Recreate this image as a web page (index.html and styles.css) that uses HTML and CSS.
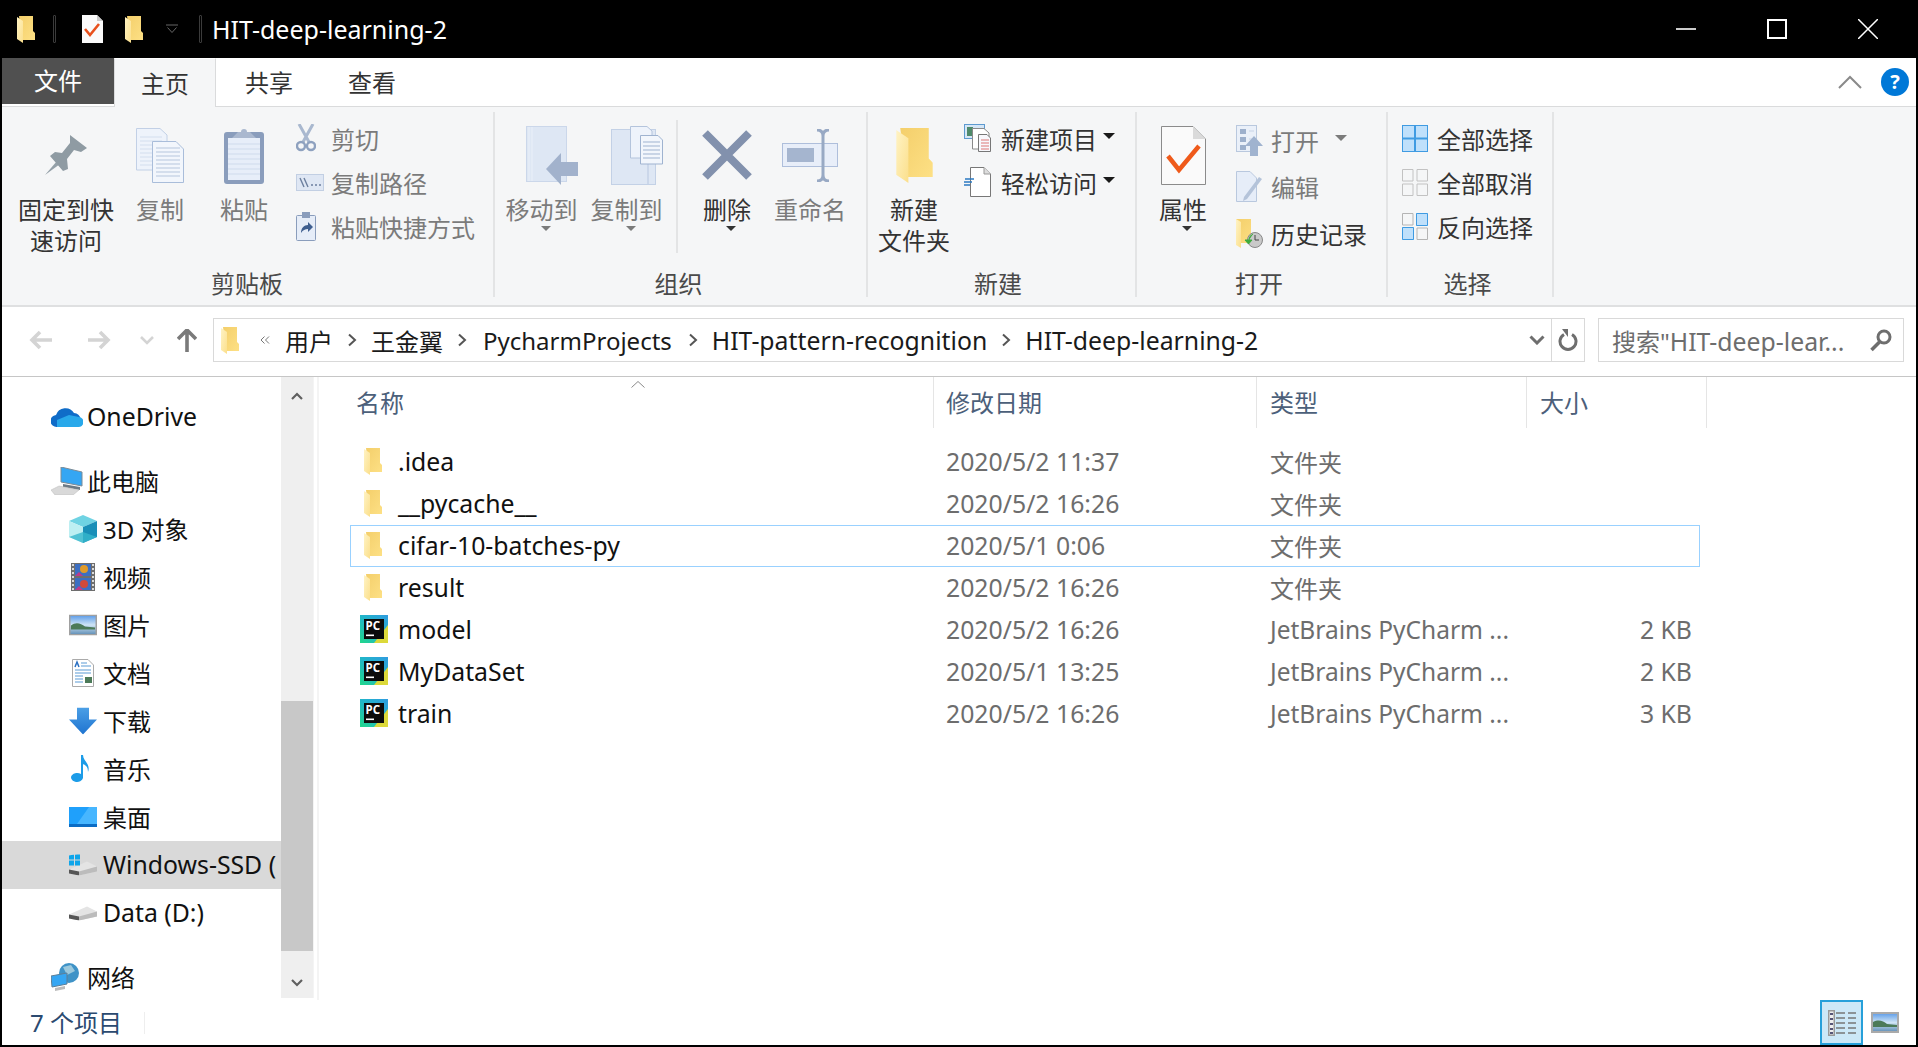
FILE: index.html
```html
<!DOCTYPE html>
<html lang="zh">
<head>
<meta charset="utf-8">
<title>HIT-deep-learning-2</title>
<link rel="stylesheet" href="styles.css">
</head>
<body>
<svg class="defs" width="0" height="0" aria-hidden="true">
  <defs>
    <linearGradient id="gFlap" x1="0" y1="0" x2="1" y2="1"><stop offset="0" stop-color="#fff3c4"/><stop offset="1" stop-color="#fbdf8c"/></linearGradient>
    <linearGradient id="gBack" x1="0" y1="0" x2="1" y2="1"><stop offset="0" stop-color="#f4cf6b"/><stop offset="1" stop-color="#fde085"/></linearGradient>
    <linearGradient id="gPc" x1="0" y1="1" x2="1" y2="0"><stop offset="0" stop-color="#21d789"/><stop offset=".5" stop-color="#21b6c9"/><stop offset="1" stop-color="#2f9be0"/></linearGradient>
    <linearGradient id="gSky" x1="0" y1="0" x2="0" y2="1"><stop offset="0" stop-color="#5b9be8"/><stop offset=".5" stop-color="#cfe4f5"/><stop offset="1" stop-color="#5e8db5"/></linearGradient>
    <linearGradient id="gBlue" x1="0" y1="0" x2="0" y2="1"><stop offset="0" stop-color="#4b9fe6"/><stop offset="1" stop-color="#1f74d0"/></linearGradient>
    <symbol id="folder" viewBox="0 0 18 27">
      <path d="M2 0H16V15L18 17V24H5Z" fill="url(#gBack)"/>
      <path d="M0 1L6 5V27L0 23Z" fill="url(#gFlap)"/>
    </symbol>
    <symbol id="pc" viewBox="0 0 28 28">
      <rect width="28" height="28" fill="url(#gPc)"/>
      <path d="M14 28L28 10V28Z" fill="#dcd93a"/>
      <rect x="4" y="4" width="20" height="20" fill="#0b0b0b"/>
      <text x="5.5" y="14.500" class="pc-text">PC</text>
      <rect x="6" y="19.5" width="8" height="1.6" fill="#fff"/>
    </symbol>
    <symbol id="crumb" viewBox="0 0 10 14"><path d="M2 1.5L8 7L2 12.5" fill="none" stroke="#555" stroke-width="2"/></symbol>
  </defs>
</svg>

<div class="window">
  <header class="titlebar">
    <svg class="tb-folder-a" width="18" height="27"><use href="#folder"/></svg>
    <span class="tb-sep tb-sep-a"></span>
    <svg class="tb-check" width="21" height="28" viewBox="0 0 21 28"><path d="M0 0H15L21 6V28H0Z" fill="#fafafa"/><path d="M15 0V6H21Z" fill="#c9c9c9"/><path d="M3 14L8 20L17 9" fill="none" stroke="#e8501c" stroke-width="2.6"/></svg>
    <svg class="tb-folder-b" width="18" height="27"><use href="#folder"/></svg>
    <svg class="tb-down" width="12" height="10" viewBox="0 0 12 10"><path d="M0 1H12M1.5 3.5L6 8.5L10.500 3.500" fill="none" stroke="#666" stroke-width="1"/></svg>
    <span class="tb-sep tb-sep-b"></span>
    <span class="tb-title">HIT-deep-learning-2</span>
    <div class="win-btns">
      <svg width="20" height="20" viewBox="0 0 20 20"><path d="M0 10H20" stroke="#fff" stroke-width="1.6"/></svg>
      <svg width="20" height="20" viewBox="0 0 20 20"><rect x="1" y="1" width="18" height="18" fill="none" stroke="#fff" stroke-width="2"/></svg>
      <svg width="20" height="20" viewBox="0 0 20 20"><path d="M0 0L20 20M20 0L0 20" stroke="#fff" stroke-width="1.5"/></svg>
    </div>
  </header>

  <nav class="tabs">
    <div class="tab-file">文件</div>
    <div class="tab tab-home">主页</div>
    <div class="tab tab-share">共享</div>
    <div class="tab tab-view">查看</div>
    <div class="tabs-right">
      <svg width="24" height="14" viewBox="0 0 24 14"><path d="M1 13L12 2L23 13" fill="none" stroke="#8a8a8a" stroke-width="2"/></svg>
      <span class="help">?</span>
    </div>
  </nav>

  <section class="ribbon">
    <div class="group g-clip">
      <div class="g-body">
        <div class="big w-pin">
          <div class="big-ico"><svg width="42" height="40" viewBox="0 0 42 40"><path d="M0 40L12 26L15 29Z" fill="#94a0a8"/><path d="M25 0L42 13L36 17L29 15L22 24L23 34L18 36L5 21L10 17L17 18L25 8Z" fill="#8f9ba3"/></svg></div>
          <div class="big-txt">固定到快<br>速访问</div>
        </div>
        <div class="big w-copy dis">
          <div class="big-ico"><svg width="48" height="55" viewBox="0 0 48 55"><path d="M.5.5H24L31 7V42H.5Z" fill="#eef3fb" stroke="#c2d0e6"/><path d="M4 9H26M4 13H26M4 17H26M4 21H26M4 25H26M4 29H26M4 33H26M4 37H26" stroke="#d3deee"/><path d="M16.500 13.500H40L47.500 21V54.500H16.500Z" fill="#f2f6fc" stroke="#a9bdda"/><path d="M20 20H44M20 24H44M20 28H44M20 32H44M20 36H44M20 40H44M20 44H44M20 48H44" stroke="#b6c6dd"/></svg></div>
          <div class="big-txt">复制</div>
        </div>
        <div class="big w-paste dis">
          <div class="big-ico"><svg width="40" height="57" viewBox="0 0 40 57"><rect y="5" width="40" height="52" rx="3" fill="#8a9dbc"/><rect x="4" y="11" width="32" height="42" fill="#e7eef9"/><path d="M4 17H36M4 22H36M4 27H36M4 32H36M4 37H36M4 42H36M4 47H36" stroke="#cfdbec"/><path d="M8 11L14 5H17A3 3 0 0 1 23 5H26L32 11Z" fill="#aab8cf"/></svg></div>
          <div class="big-txt">粘贴</div>
        </div>
        <div class="small-col col-clip">
          <div class="small dis"><span class="s-ico"><svg width="20" height="28" viewBox="0 0 20 28"><path d="M3 0L13 18M17 0L7 18" stroke="#a9b8cf" stroke-width="3"/><circle cx="5" cy="22" r="4" fill="none" stroke="#8ea1bf" stroke-width="2.400"/><circle cx="15" cy="22" r="4" fill="none" stroke="#8ea1bf" stroke-width="2.400"/></svg></span>剪切</div>
          <div class="small dis"><span class="s-ico"><svg width="28" height="17" viewBox="0 0 28 17"><rect x=".5" y=".5" width="27" height="16" fill="#dfe7f4" stroke="#c2cfe3"/><path d="M4 4L8 13M8 4L12 13" stroke="#6c7f9e" stroke-width="1.400"/><path d="M15 11H17M19 11H21M23 11H25" stroke="#6c7f9e" stroke-width="1.600"/></svg></span>复制路径</div>
          <div class="small dis"><span class="s-ico"><svg width="20" height="29" viewBox="0 0 20 29"><rect x=".5" y="3.500" width="19" height="25" rx="1" fill="#e6edf8" stroke="#8a9dbc"/><rect x="6" y="0" width="8" height="6" fill="#8a9dbc"/><path d="M5 21C5 16 8 13 12 13V10L17 15L12 20V17C9 17 7 18 5 21Z" fill="#3f5f8f"/></svg></span>粘贴快捷方式</div>
        </div>
      </div>
      <div class="g-label">剪贴板</div>
    </div>

    <div class="group g-org">
      <div class="g-body">
        <div class="big w-85 dis">
          <div class="big-ico ico-end"><svg width="52" height="59" viewBox="0 0 52 59"><rect x=".5" y=".5" width="40" height="55" fill="#dee7f4" stroke="#cbd7ea"/><path d="M3 1V55M6 1V55" stroke="#eaf0f9"/><path d="M20 43L35 27V36H52V50H35V59Z" fill="#a2b2cc"/></svg></div>
          <div class="big-txt drop">移动到</div>
        </div>
        <div class="big w-85 dis">
          <div class="big-ico ico-end"><svg width="52" height="59" viewBox="0 0 52 59"><rect x=".5" y="3.500" width="44" height="55" fill="#dee7f4" stroke="#c3d1e6"/><path d="M37 4V58" stroke="#cbd7ea" stroke-width="2"/><path d="M19.500 .5H36L41 5V32H19.500Z" fill="#eef3fb" stroke="#b4c4dc"/><path d="M29.500 9.500H47L51.500 14V38H29.500Z" fill="#f2f6fc" stroke="#9fb3d0"/><path d="M32 16H49M32 20H49M32 24H49M32 28H49M32 32H49" stroke="#9fb3d0"/></svg></div>
          <div class="big-txt drop">复制到</div>
        </div>
        <div class="inner-sep"></div>
        <div class="big w-del">
          <div class="big-ico"><svg width="50" height="50" viewBox="0 0 50 50"><path d="M3 3L47 47M47 3L3 47" stroke="#8291ad" stroke-width="8"/></svg></div>
          <div class="big-txt drop">删除</div>
        </div>
        <div class="big w-ren dis">
          <div class="big-ico"><svg width="56" height="53" viewBox="0 0 56 53"><rect x=".5" y="14.500" width="55" height="23" fill="#e8eef9" stroke="#aebedb"/><rect x="5" y="19" width="27" height="14" fill="#a5b5cf"/><path d="M35 1C39 1 41 3 41 7V46C41 50 39 52 35 52M47 1C43 1 41 3 41 7M47 52C43 52 41 50 41 46" fill="none" stroke="#98a9c4" stroke-width="3"/></svg></div>
          <div class="big-txt">重命名</div>
        </div>
      </div>
      <div class="g-label">组织</div>
    </div>

    <div class="group g-new">
      <div class="g-body">
        <div class="big w-92">
          <div class="big-ico"><svg width="37" height="55" viewBox="0 0 18 27"><use href="#folder"/></svg></div>
          <div class="big-txt">新建<br>文件夹</div>
        </div>
        <div class="small-col col-new">
          <div class="small"><span class="s-ico s-ico-new"><svg width="27" height="28" viewBox="0 0 27 28"><rect x=".5" y=".5" width="20" height="14" fill="#d5e6f6" stroke="#5d9ad0"/><rect x="3" y="3" width="6" height="9" fill="#4f8a6b"/><path d="M8.500 4.500H20L25 9V25H8.500Z" fill="#fff" stroke="#8a8a8a"/><path d="M14.500 10.500H23L26.500 14V27.500H14.500Z" fill="#f8f8fc" stroke="#777"/><path d="M17 16H25M17 19H25M17 22H25M17 25H25" stroke="#d77"/></svg></span>新建项目<span class="tri-r"></span></div>
          <div class="small"><span class="s-ico s-ico-new"><svg width="27" height="30" viewBox="0 0 27 30"><path d="M6.500 .5H20L26.500 7V29.500H6.500Z" fill="#fff" stroke="#777"/><path d="M20 .5V7H26.500" fill="#ddd" stroke="#999"/><path d="M1 12H10M0 15H8M0 18H6" stroke="#2b79c2" stroke-width="1.600"/></svg></span>轻松访问<span class="tri-r"></span></div>
        </div>
      </div>
      <div class="g-label">新建</div>
    </div>

    <div class="group g-open">
      <div class="g-body">
        <div class="big w-92">
          <div class="big-ico"><svg width="45" height="59" viewBox="0 0 45 59"><path d="M.5.5H32L44.500 13V58.500H.5Z" fill="#fafafa" stroke="#8b8b8b"/><path d="M32 .5V13H44.500Z" fill="#dadada"/><path d="M7 30L18 44L38 20" fill="none" stroke="#ef5a1a" stroke-width="4.500"/></svg></div>
          <div class="big-txt drop">属性</div>
        </div>
        <div class="small-col col-open">
          <div class="small tall dis"><span class="s-ico"><svg width="27" height="31" viewBox="0 0 27 31"><rect x=".5" y=".5" width="20" height="26" fill="#eaf0f9" stroke="#b9c8de"/><path d="M4 4H10V9H4ZM4 12H10V17H4ZM4 20H10V25H4Z" fill="#9db0cc"/><path d="M13 6H18M13 14H18" stroke="#c8d4e6"/><path d="M18 11L27 21H22V31H14V21H9Z" fill="#a0b3cf"/></svg></span>打开<span class="tri-r tri-gray"></span></div>
          <div class="small tall dis"><span class="s-ico"><svg width="27" height="31" viewBox="0 0 27 31"><path d="M.5.5H14L20.500 7V30.500H.5Z" fill="#e6edf8" stroke="#b9c8de"/><path d="M8 26L7 30L11 28L26 8L23 6Z" fill="#b4c3d9"/></svg></span>编辑</div>
          <div class="small tall"><span class="s-ico"><svg width="27" height="29" viewBox="0 0 27 29"><path d="M0 0H15V14H20V24H5Z" fill="url(#gBack)"/><path d="M0 0L5 3V29L0 26Z" fill="url(#gFlap)"/><circle cx="19" cy="21" r="7.500" fill="#c9c9c9" stroke="#888"/><path d="M19 16V21H23" stroke="#444" fill="none"/><path d="M9 21H16L12.500 25ZM13 21C13 18 15 16 17 15" fill="#3cab3c" stroke="#3cab3c"/></svg></span>历史记录</div>
        </div>
      </div>
      <div class="g-label">打开</div>
    </div>

    <div class="group g-sel">
      <div class="g-body">
        <div class="small-col col-sel">
          <div class="small"><span class="s-ico"><svg width="26" height="27" viewBox="0 0 26 27"><rect x=".5" y=".5" width="25" height="26" fill="#bfe0fb" stroke="#3f9be2"/><path d="M13 0V27M0 13.500H26" stroke="#3f9be2" stroke-width="2"/></svg></span>全部选择</div>
          <div class="small"><span class="s-ico"><svg width="26" height="27" viewBox="0 0 26 27"><path d="M.5.5H11V12H.5ZM15 .5H25.500V12H15ZM.5 15H11V26.500H.5ZM15 15H25.500V26.500H15Z" fill="none" stroke="#c2c2c2"/></svg></span>全部取消</div>
          <div class="small"><span class="s-ico"><svg width="26" height="27" viewBox="0 0 26 27"><path d="M.5.5H11V12H.5ZM15 15H25.500V26.500H15Z" fill="none" stroke="#b4b4b4"/><path d="M14 0H26V13H14ZM0 14H12V27H0Z" fill="#bfe0fb"/><path d="M14.500 .5H25.500V12.500H14.500ZM.5 14.500H11.500V26.500H.5Z" fill="none" stroke="#3f9be2"/></svg></span>反向选择</div>
        </div>
      </div>
      <div class="g-label">选择</div>
    </div>
  </section>

  <section class="address">
    <svg class="ab-back" width="24" height="20" viewBox="0 0 24 20"><path d="M11 2L3 10L11 18M3 10H23" fill="none" stroke="#d4d4d4" stroke-width="3.600"/></svg>
    <svg class="ab-fwd" width="24" height="20" viewBox="0 0 24 20"><path d="M13 2L21 10L13 18M21 10H1" fill="none" stroke="#d4d4d4" stroke-width="3.600"/></svg>
    <svg class="ab-drop" width="14" height="9" viewBox="0 0 14 9"><path d="M1 1L7 7L13 1" fill="none" stroke="#d4d4d4" stroke-width="2.600"/></svg>
    <svg class="ab-up" width="20" height="23" viewBox="0 0 20 23"><path d="M1 10L10 1L19 10M10 2V23" fill="none" stroke="#7a7a7a" stroke-width="3.600"/></svg>
    <div class="crumbs">
      <svg class="cb-folder" width="18" height="27"><use href="#folder"/></svg>
      <svg class="cb-more" width="10" height="8" viewBox="0 0 10 8"><path d="M4.500 .5L1 4L4.500 7.500M9 .5L5.500 4L9 7.500" fill="none" stroke="#777"/></svg>
      <span>用户</span><svg class="cb-chev" width="10" height="14"><use href="#crumb"/></svg>
      <span>王金翼</span><svg class="cb-chev" width="10" height="14"><use href="#crumb"/></svg>
      <span class="cb-py">PycharmProjects</span><svg class="cb-chev" width="10" height="14"><use href="#crumb"/></svg>
      <span class="lat">HIT-pattern-recognition</span><svg class="cb-chev" width="10" height="14"><use href="#crumb"/></svg>
      <span class="lat">HIT-deep-learning-2</span>
      <div class="cb-end">
        <svg width="16" height="10" viewBox="0 0 16 10"><path d="M1.500 1.500L8 8L14.500 1.500" fill="none" stroke="#6e6e6e" stroke-width="3"/></svg>
        <div class="cb-refresh"><svg width="20" height="22" viewBox="0 0 20 22"><path d="M6 5.500A8 8 0 1 0 14 5.500" fill="none" stroke="#6e6e6e" stroke-width="3"/><path d="M4 0H10V8Z" fill="#6e6e6e"/></svg></div>
      </div>
    </div>
    <div class="search">
      <span class="search-txt">搜索"<span class="lat">HIT-deep-lear...</span></span>
      <svg width="22" height="23" viewBox="0 0 22 23"><circle cx="14" cy="8" r="6" fill="none" stroke="#6e6e6e" stroke-width="3"/><path d="M9.500 13L1.500 21" stroke="#6e6e6e" stroke-width="3.600"/></svg>
    </div>
  </section>

  <main class="main">
    <aside class="nav">
      <div class="nav-row lv1"><svg class="n-ico" width="32" height="22" viewBox="0 0 32 22"><path d="M6 21A6 6 0 0 1 5 9A10 10 0 0 1 23 7A7.500 7.500 0 0 1 26 21Z" fill="#0f6cc8"/><path d="M6 21H27A5 5 0 0 0 28 11L18 9L6 14Z" fill="#28a8ea"/></svg><span class="lat">OneDrive</span></div>
      <div class="nav-row lv1 sect"><svg class="n-ico" width="32" height="28" viewBox="0 0 32 28"><path d="M10 0L31 5V19L10 15Z" fill="#35a6f3" stroke="#7d8b96"/><path d="M12 17L29 20V23L12 20Z" fill="#6c7a85"/><path d="M0 23L8 19L28 23L22 28H4Z" fill="#d9d9d9" stroke="#bbb" stroke-width=".5"/></svg>此电脑</div>
      <div class="nav-row lv2"><svg class="n-ico" width="28" height="28" viewBox="0 0 28 28"><path d="M14 0L28 6L14 12L0 6Z" fill="#6fd3e3"/><path d="M0 6L14 12V28L0 22Z" fill="#bdeff2"/><path d="M28 6L14 12V28L28 22Z" fill="#1a8fb8"/><path d="M0 22L14 17L28 22L14 28Z" fill="#36b6cc" opacity=".8"/></svg>3D 对象</div>
      <div class="nav-row lv2"><svg class="n-ico" width="28" height="28" viewBox="0 0 28 28"><rect x="2" width="24" height="28" fill="#6e6e6e"/><rect x="6" y="1" width="16" height="12" fill="#3c6fc2"/><rect x="6" y="15" width="16" height="12" fill="#3c6fc2"/><circle cx="15" cy="6" r="4" fill="#e09a2a"/><circle cx="15" cy="21" r="4" fill="#d0493a"/><path d="M6 13L10 9L14 13ZM6 27L10 23L14 27Z" fill="#c03a8a"/><path d="M3 2H5M3 6H5M3 10H5M3 14H5M3 18H5M3 22H5M3 26H5M23 2H25M23 6H25M23 10H25M23 14H25M23 18H25M23 22H25M23 26H25" stroke="#fff" stroke-width="1.500"/></svg>视频</div>
      <div class="nav-row lv2"><svg class="n-ico" width="28" height="21" viewBox="0 0 28 21"><rect x=".75" y=".75" width="26.500" height="19.500" fill="url(#gSky)" stroke="#a0a0a0" stroke-width="1.500"/><path d="M2 11C7 7 12 9 16 12L26 13V15H2Z" fill="#4c7a58"/></svg>图片</div>
      <div class="nav-row lv2"><svg class="n-ico" width="28" height="28" viewBox="0 0 28 28"><path d="M3.500 .5H19L24.500 6V27.500H3.500Z" fill="#fff" stroke="#aaa"/><path d="M6 8L8 3L10 8" fill="none" stroke="#2a6fc2" stroke-width="1.500"/><path d="M12 4H18M12 7H22M6 11H22M6 14H22M6 17H14M6 20H14M6 23H14" stroke="#5b9bd5"/><rect x="16" y="18" width="7" height="6" fill="#4c7a58"/></svg>文档</div>
      <div class="nav-row lv2"><svg class="n-ico" width="28" height="27" viewBox="0 0 28 27"><path d="M8 0H20V12H28L14 27L0 12H8Z" fill="url(#gBlue)"/></svg>下载</div>
      <div class="nav-row lv2"><svg class="n-ico" width="28" height="28" viewBox="0 0 28 28"><path d="M12 0H14C14 6 22 9 19 17C19 11 16 10 14 9V23A6 4.500 0 1 1 12 19Z" fill="#1c9ce8"/></svg>音乐</div>
      <div class="nav-row lv2"><svg class="n-ico" width="28" height="20" viewBox="0 0 28 20"><rect width="28" height="20" fill="#1fa0fb"/><path d="M20 0H28V17H8Z" fill="#47b6ff"/><rect y="17" width="28" height="3" fill="#0b6cc4"/></svg>桌面</div>
      <div class="nav-row lv2 hover"><svg class="n-ico" width="28" height="21" viewBox="0 0 28 21"><path d="M0 15L18 7L28 12V17L10 21L0 19Z" fill="#e4e4e4"/><path d="M0 15L10 17V21L0 19Z" fill="#555"/><path d="M10 17L28 12V17L10 21Z" fill="#bcbcbc"/><path d="M0 1L5 0V5H0ZM6 0L11 -1V5H6ZM0 6H5V11H0ZM6 6H11V11L6 11Z" fill="#0ea5ea"/></svg><span class="lat">Windows-SSD (</span></div>
      <div class="nav-row lv2"><svg class="n-ico" width="28" height="15" viewBox="0 0 28 15"><path d="M0 9L18 1L28 6V11L10 15L0 13Z" fill="#e4e4e4"/><path d="M0 9L10 11V15L0 13Z" fill="#555"/><path d="M10 11L28 6V11L10 15Z" fill="#bcbcbc"/></svg><span class="lat">Data (D:)</span></div>
      <div class="nav-row lv1 sect"><svg class="n-ico" width="28" height="28" viewBox="0 0 28 28"><circle cx="18" cy="10" r="10" fill="#3f93c7"/><path d="M12 4L20 2L24 8L16 12Z" fill="#9cc9dd"/><path d="M0 13L16 10V21L1 24Z" fill="#35a6f3" stroke="#5f7f96"/><path d="M4 25L14 23V26L4 28Z" fill="#bbb"/></svg>网络</div>
    </aside>
    <div class="scroll">
      <svg class="sc-up" width="12" height="8" viewBox="0 0 12 8"><path d="M1 7L6 2L11 7" fill="none" stroke="#606060" stroke-width="2.200"/></svg>
      <div class="sc-thumb"></div>
      <svg class="sc-down" width="12" height="8" viewBox="0 0 12 8"><path d="M1 1L6 6L11 1" fill="none" stroke="#606060" stroke-width="2.200"/></svg>
    </div>
    <div class="list">
      <div class="list-head">
        <div class="hc hc-name">名称<svg class="sort" width="14" height="7" viewBox="0 0 14 7"><path d="M.5 6.500L7 .5L13.500 6.500" fill="none" stroke="#8a8a8a"/></svg></div>
        <div class="hc">修改日期</div>
        <div class="hc">类型</div>
        <div class="hc">大小</div>
      </div>
      <div class="rows">
        <div class="row"><div class="c-name"><span class="f-ico f-folder"><svg width="18" height="27"><use href="#folder"/></svg></span>.idea</div><div class="c-meta">2020/5/2 11:37</div><div class="c-meta cjk">文件夹</div><div class="c-size"></div></div>
        <div class="row"><div class="c-name"><span class="f-ico f-folder"><svg width="18" height="27"><use href="#folder"/></svg></span>__pycache__</div><div class="c-meta">2020/5/2 16:26</div><div class="c-meta cjk">文件夹</div><div class="c-size"></div></div>
        <div class="row sel"><div class="c-name"><span class="f-ico f-folder"><svg width="18" height="27"><use href="#folder"/></svg></span>cifar-10-batches-py</div><div class="c-meta">2020/5/1 0:06</div><div class="c-meta cjk">文件夹</div><div class="c-size"></div></div>
        <div class="row"><div class="c-name"><span class="f-ico f-folder"><svg width="18" height="27"><use href="#folder"/></svg></span>result</div><div class="c-meta">2020/5/2 16:26</div><div class="c-meta cjk">文件夹</div><div class="c-size"></div></div>
        <div class="row"><div class="c-name"><span class="f-ico"><svg width="28" height="28"><use href="#pc"/></svg></span>model</div><div class="c-meta">2020/5/2 16:26</div><div class="c-meta jb">JetBrains PyCharm ...</div><div class="c-size">2 KB</div></div>
        <div class="row"><div class="c-name"><span class="f-ico"><svg width="28" height="28"><use href="#pc"/></svg></span>MyDataSet</div><div class="c-meta">2020/5/1 13:25</div><div class="c-meta jb">JetBrains PyCharm ...</div><div class="c-size">2 KB</div></div>
        <div class="row"><div class="c-name"><span class="f-ico"><svg width="28" height="28"><use href="#pc"/></svg></span>train</div><div class="c-meta">2020/5/2 16:26</div><div class="c-meta jb">JetBrains PyCharm ...</div><div class="c-size">3 KB</div></div>
      </div>
    </div>
  </main>

  <footer class="status">
    <span class="count">7 个项目</span>
    <div class="views">
      <div class="view-on"><svg width="28" height="26" viewBox="0 0 28 26"><rect x=".75" y=".75" width="5.500" height="24.500" fill="#eee" stroke="#999" stroke-width="1.500"/><path d="M2 4H5M2 9H5M2 14H5M2 19H5M2 23H5" stroke="#557" stroke-width="2"/><path d="M8 3H17M20 3H28M8 8H17M20 8H28M8 13H17M20 13H28M8 18H17M20 18H28M8 23H17M20 23H28" stroke="#777" stroke-width="1.500"/></svg></div>
      <svg class="view-off" width="28" height="21" viewBox="0 0 28 21"><rect x="1" y="1" width="26" height="19" fill="url(#gSky)" stroke="#aaa" stroke-width="2"/><path d="M2 10C8 7 12 9 16 12L26 13V15H2Z" fill="#4c7a58"/></svg>
    </div>
  </footer>
</div>
</body>
</html>
```
FILE: styles.css
```css
* { box-sizing: border-box; }
html, body { margin: 0; padding: 0; background: #000; }
body {
  width: 1918px;
  height: 1047px;
  overflow: hidden;
  font-family: "Noto Sans", "Noto Sans CJK SC", sans-serif;
  font-size: 24px;
  color: #1a1a1a;
}
svg { display: block; flex: none; }
.defs { position: absolute; }
.pc-text { font: 700 11.5px "Noto Sans", sans-serif; fill: #fff; }
.lat { font-size: 24.8px; }

.window {
  width: 1918px;
  height: 1047px;
  border: 2px solid #000;
  border-top: 0;
  display: flex;
  flex-direction: column;
  background: #fff;
}

/* title bar */
.titlebar {
  height: 58px;
  background: #000;
  color: #fff;
  display: flex;
  align-items: center;
  flex: none;
}
.tb-folder-a { margin-left: 15px; }
.tb-sep { width: 3px; height: 28px; border: 1px solid #3b3b3b; border-radius: 1px; background: #000; }
.tb-sep-a { margin-left: 18px; }
.tb-check { margin-left: 26px; }
.tb-folder-b { margin-left: 22px; }
.tb-down { margin-left: 23px; }
.tb-sep-b { margin-left: 21px; }
.tb-title { margin-left: 10px; font-size: 25px; line-height: 58px; }
.win-btns { margin-left: auto; display: flex; gap: 71px; margin-right: 38px; }

/* tabs */
.tabs {
  height: 49px;
  flex: none;
  display: flex;
  background: #fff;
  border-bottom: 1px solid #dadbdc;
}
.tab-file {
  width: 112px;
  height: 46px;
  background: #505050;
  color: #fff;
  text-align: center;
  line-height: 46px;
}
.tab { line-height: 50px; text-align: center; color: #333; }
.tab-home {
  width: 102px;
  height: 49px;
  background: #f5f6f7;
  border: 1px solid #dadbdc;
  border-width: 1px 1px 0;
  border-top-color: #fff;
  margin-left: 0;
}
.tab-share { width: 106px; }
.tab-view { width: 100px; }
.tabs-right { margin-left: auto; display: flex; align-items: center; gap: 19px; margin-right: 7px; padding-bottom: 1px; }
.help {
  width: 28px; height: 28px; border-radius: 50%;
  background: #0078d7; color: #fff;
  font: 700 20px/28px "Noto Sans", sans-serif;
  text-align: center;
}

/* ribbon */
.ribbon {
  height: 200px;
  flex: none;
  background: #f5f6f7;
  border-bottom: 2px solid #dfe0e1;
  display: flex;
  padding: 5px 0 8px;
}
.group {
  display: flex;
  flex-direction: column;
  border-right: 2px solid #e3e4e5;
}
.g-clip { width: 493px; padding-left: 8px; }
.g-org { width: 373px; padding-left: 4px; }
.g-new { width: 269px; }
.g-open { width: 251px; }
.g-sel { width: 166px; padding-left: 14px; }
.g-body { flex: 1; display: flex; min-height: 0; }
.g-label { height: 26px; line-height: 26px; text-align: center; color: #4a4a4a; flex: none; }
.g-clip .g-label { margin-left: -8px; padding-right: 1px; }
.g-org .g-label { margin-left: -4px; padding-right: 4px; }
.g-new .g-label { padding-right: 7px; }
.g-open .g-label { padding-right: 5px; }
.g-sel .g-label { margin-left: -14px; padding-right: 5px; }

.big { display: flex; flex-direction: column; align-items: center; padding-top: 13px; flex: none; color: #333; }
.big-ico { height: 60px; display: flex; align-items: center; justify-content: center; margin-bottom: 9px; }
.ico-end { padding-left: 20px; }
.big-txt { line-height: 31px; text-align: center; white-space: nowrap; position: relative; }
.dis, .dis .big-txt { color: #7b7b7b; }
.w-pin { width: 112px; }
.w-copy { width: 76px; }
.w-paste { width: 92px; }
.w-85 { width: 85px; }
.w-92 { width: 92px; }
.w-del { width: 94px; margin-left: 2px; }
.w-ren { width: 72px; }
.inner-sep { width: 2px; height: 133px; margin: 8px 0 0 7px; background: #e3e4e5; }
.drop::after {
  content: "";
  position: absolute;
  left: 50%;
  bottom: -6px;
  margin-left: -1px;
  border: 5px solid transparent;
  border-top: 5px solid currentColor;
  border-bottom: 0;
}

.small-col { display: flex; flex-direction: column; margin-top: 4px; }
.col-clip { margin-left: 6px; }
.col-open { margin-left: 7px; margin-top: 5px; }
.small { height: 44px; display: flex; align-items: center; white-space: nowrap; color: #333; }
.small.dis { color: #7b7b7b; }
.tall { height: 46.5px; }
.s-ico { width: 35px; flex: none; display: flex; }
.s-ico-new { width: 37px; margin-left: 4px; }
.tri-r { margin-left: 6px; margin-top: -4px; border: 6px solid transparent; border-top: 6px solid #1a1a1a; border-bottom: 0; }
.tri-gray { border-top-color: #7b7b7b; margin-left: 16px; }

/* address */
.address {
  height: 70px;
  flex: none;
  background: #fff;
  border-bottom: 1px solid #c6c6c6;
  display: flex;
  align-items: center;
  padding: 0 12px 3px 0;
}
.ab-back { margin-left: 27px; }
.ab-fwd { margin-left: 34px; }
.ab-drop { margin-left: 29px; }
.ab-up { margin-left: 23px; }
.crumbs {
  margin-left: 16px;
  width: 1372px;
  height: 44px;
  border: 1px solid #d9d9d9;
  display: flex;
  align-items: center;
  color: #1a1a1a;
}
.cb-folder { margin-left: 7px; }
.cb-more { margin-left: 21px; margin-right: 15px; }
.cb-chev { margin: 0 14px; }
.cb-py { margin: 0 2px; }
.cb-end { margin-left: auto; height: 100%; display: flex; align-items: center; }
.cb-end > svg { margin-right: 6px; }
.cb-refresh { width: 33px; height: 100%; border-left: 1px solid #d9d9d9; display: flex; align-items: center; justify-content: center; }
.search {
  margin-left: 13px;
  flex: 1;
  height: 44px;
  border: 1px solid #d9d9d9;
  display: flex;
  align-items: center;
  justify-content: space-between;
  padding: 0 11px 0 13px;
}
.search-txt { color: #6d6d6d; white-space: nowrap; }

/* main */
.main { flex: 1; min-height: 0; display: flex; }
.nav { width: 279px; flex: none; padding-top: 16px; overflow: hidden; }
.nav-row { height: 48px; padding-bottom: 2px; display: flex; align-items: center; white-space: nowrap; color: #111; position: relative; }
.sect { margin-top: 16px; }
.lv1 { padding-left: 85px; }
.lv2 { padding-left: 101px; }
.n-ico { position: absolute; top: 50%; transform: translateY(-50%); }
.lv1 .n-ico { left: 49px; }
.lv2 .n-ico { left: 67px; }
.hover { background: #d9d9d9; }
.scroll {
  width: 33px;
  flex: none;
  height: 621px;
  background: #efefef;
  margin-right: 3px;
  position: relative;
  border-right: 1px solid #f4f4f4;
}
.sc-up { position: absolute; left: 10px; top: 15px; }
.sc-down { position: absolute; left: 10px; bottom: 11px; }
.sc-thumb { position: absolute; left: 0; right: 0; top: 324px; height: 250px; background: #c8c8c8; }
.list { flex: 1; min-width: 0; border-left: 2px solid #f4f4f4; padding-left: 31px; }
.list-head { display: flex; height: 51px; }
.hc {
  height: 51px;
  line-height: 52px;
  color: #4c607a;
  border-right: 1px solid #e5e5e5;
  padding-left: 12px;
  width: 323px;
  position: relative;
}
.hc-name { width: 584px; padding-left: 6px; }
.hc:nth-child(3) { width: 270px; padding-left: 13px; }
.hc:nth-child(4) { width: 180px; padding-left: 13px; }
.sort { position: absolute; left: 281px; top: 4px; }
.rows { margin-top: 13px; width: 1350px; }
.row { height: 42px; padding-bottom: 2px; display: flex; align-items: center; white-space: nowrap; border: 1px solid transparent; font-size: 24.8px; }
.sel { border-color: #99d1ff; }
.c-name { width: 583px; display: flex; align-items: center; color: #111; padding-left: 9px; }
.f-ico { width: 28px; height: 28px; margin-right: 10px; display: flex; align-items: center; justify-content: center; flex: none; }
.f-folder { padding-right: 3px; }
.c-meta { width: 323px; padding-left: 12px; color: #6d6d6d; overflow: hidden; }
.c-meta:nth-child(3) { width: 270px; padding-left: 13px; }
.cjk { font-size: 24px; }
.jb { font-size: 24.5px; }
.c-size { flex: 1; text-align: right; padding-right: 7px; color: #6d6d6d; }

/* status */
.status {
  height: 45px;
  flex: none;
  display: flex;
  align-items: center;
  background: #fff;
  color: #2b4a70;
}
.count { margin-left: 28px; padding-right: 20px; width: 115px; white-space: nowrap; border-right: 1px solid #eee; line-height: 22px; }
.views { margin-left: auto; height: 100%; display: flex; align-items: center; margin-right: 17px; gap: 8px; }
.view-on {
  width: 43px; height: 45px;
  background: #cce8f7;
  border: 2px solid #26a0da;
  display: flex; align-items: center; justify-content: center;
}
```
